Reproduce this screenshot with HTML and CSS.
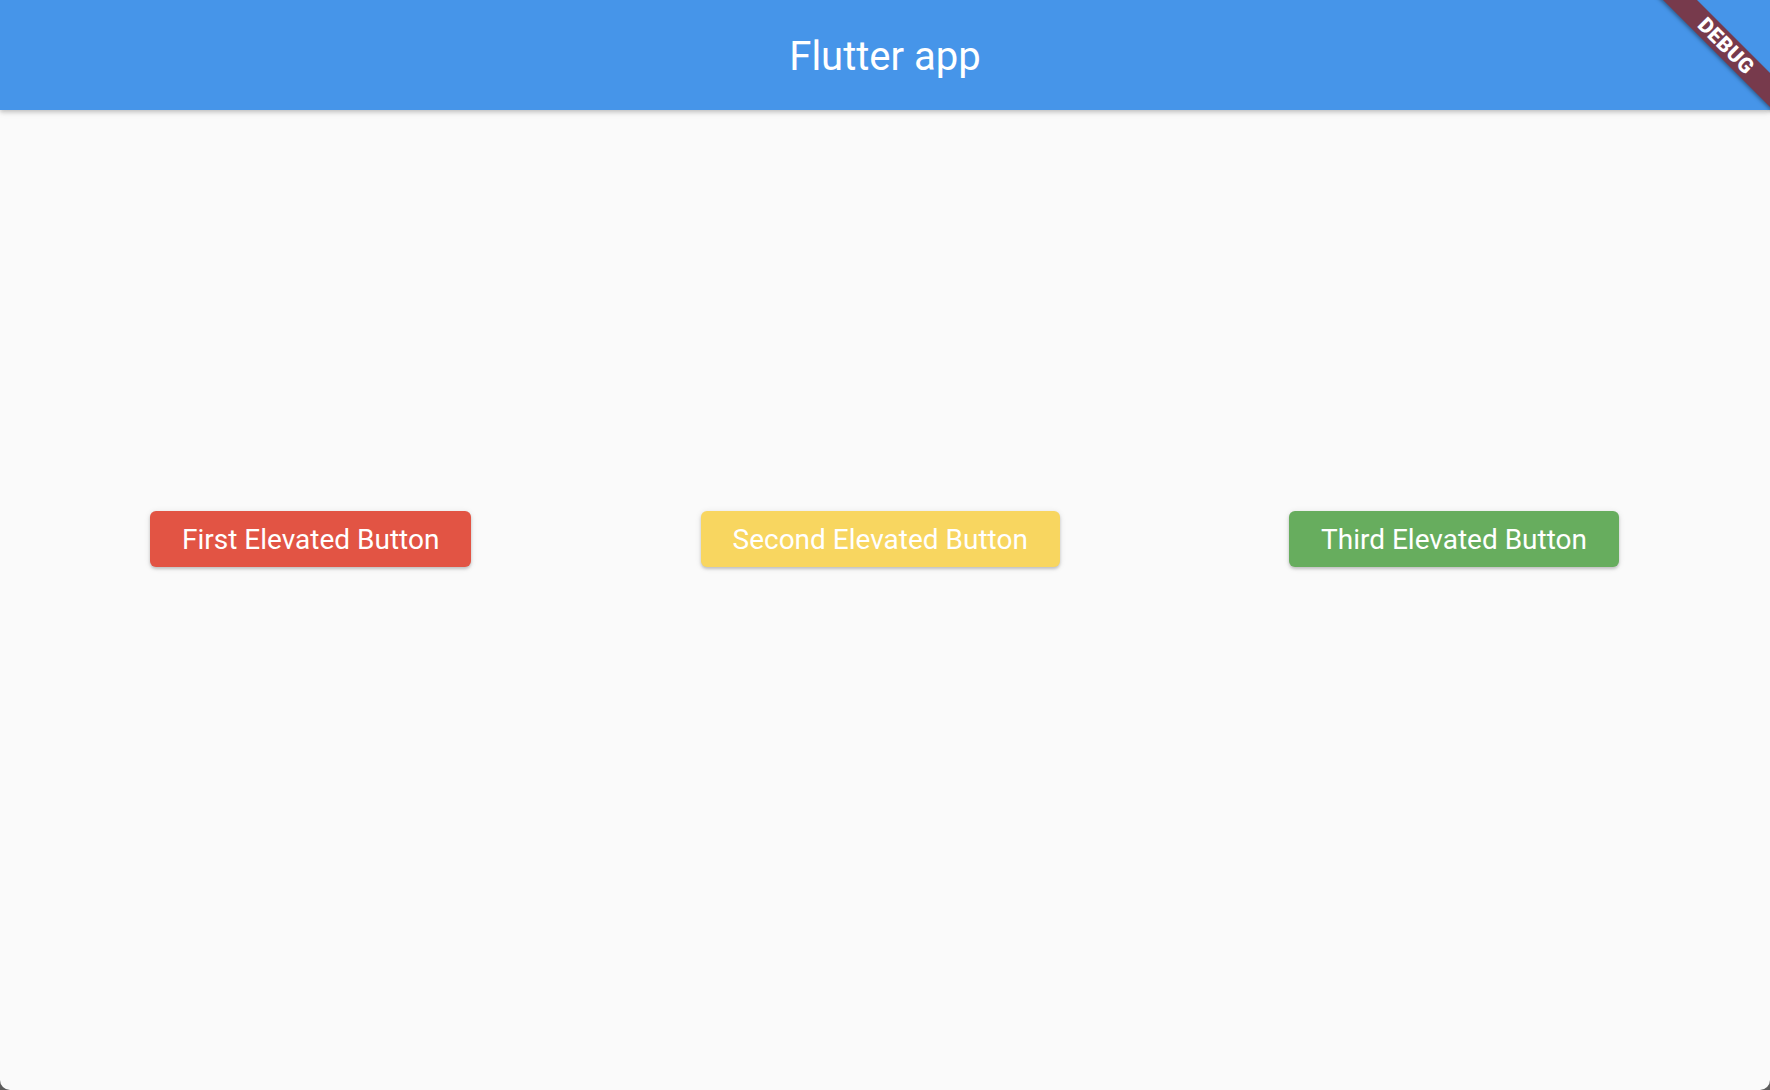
FILE: index.html
```html
<!DOCTYPE html>
<html lang="en">
<head>
<meta charset="utf-8">
<title>Flutter app</title>
<link rel="stylesheet" href="styles.css">
</head>
<body>
<div class="app">
  <header class="appbar">
    <h1 class="title">Flutter app</h1>
  </header>
  <main class="content">
    <div class="row">
      <button class="btn btn-red">First Elevated Button</button>
      <button class="btn btn-yellow">Second Elevated Button</button>
      <button class="btn btn-green">Third Elevated Button</button>
    </div>
  </main>
  <div class="debug-banner">DEBUG</div>
</div>
</body>
</html>
```

FILE: styles.css
```css
html, body {
  margin: 0;
  padding: 0;
  background: #5c5c5c;
}

.app {
  position: relative;
  width: 1770px;
  height: 1090px;
  background: #fafafa;
  border-radius: 0 0 10px 10px;
  overflow: hidden;
  font-family: Roboto, "Liberation Sans", sans-serif;
}

.appbar {
  height: 110px;
  background: #4695e9;
  display: flex;
  align-items: center;
  justify-content: center;
  box-shadow: 0 2px 4px rgba(0, 0, 0, 0.18), 0 4px 6px rgba(0, 0, 0, 0.06);
  position: relative;
  z-index: 1;
}

.title {
  margin: 0;
  color: #ffffff;
  font-weight: 400;
  font-size: 40px;
  line-height: 40px;
  padding-top: 3px;
}

.content {
  padding-top: 401px;
}

.row {
  display: flex;
  justify-content: space-between;
  padding: 0 151px 0 150px;
}

.btn {
  height: 56px;
  padding: 2px 32px 0;
  border: none;
  border-radius: 6px;
  color: #ffffff;
  font-family: Roboto, "Liberation Sans", sans-serif;
  font-size: 28px;
  font-weight: 400;
  line-height: 54px;
  box-shadow: 0 2px 3px rgba(0, 0, 0, 0.18), 0 1px 6px rgba(0, 0, 0, 0.10);
}

.btn-red { background: #e25444; }
.btn-yellow { background: #f8d660; }
.btn-green { background: #67ad5e; }

.debug-banner {
  position: absolute;
  left: 1626px;
  top: 34px;
  width: 200px;
  height: 24px;
  transform: rotate(45deg);
  background: #773a4c;
  color: #ffffff;
  font-family: Roboto, "Liberation Sans", sans-serif;
  font-size: 21px;
  font-weight: 900;
  line-height: 24px;
  text-align: center;
  letter-spacing: 0.5px;
  box-shadow: 0 2px 4px rgba(0, 0, 0, 0.35);
  z-index: 2;
}
```
